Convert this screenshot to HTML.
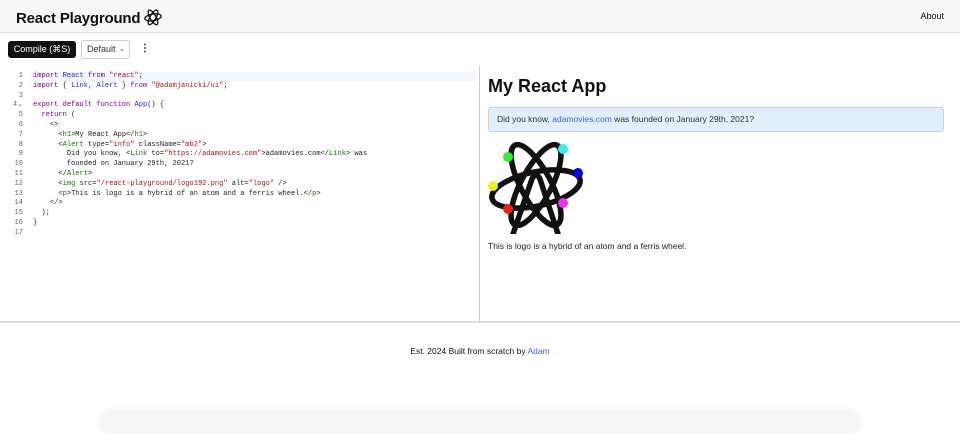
<!DOCTYPE html>
<html><head><meta charset="utf-8"><style>
*{box-sizing:border-box;margin:0;padding:0}
body{width:960px;height:420px;overflow:hidden;background:#fff;font-family:"Liberation Sans",sans-serif;color:#111;position:relative}
.hdr{position:absolute;left:0;top:0;width:960px;height:33px;background:#f7f7f7;border-bottom:1px solid #ddd}
.title{position:absolute;left:16px;top:8px;font-size:15px;font-weight:bold;letter-spacing:-.2px}
.about{position:absolute;right:16px;top:11px;font-size:9px}
.btn{position:absolute;left:8px;top:41px;width:68px;height:17px;background:#111;color:#fff;border-radius:3px;font-size:9px;text-align:center;line-height:17px}
.sel{position:absolute;left:81px;top:40px;width:49px;height:19px;border:1px solid #ccc;border-radius:3px;font-size:9px;line-height:17px;padding-left:5px;color:#333}
.sel span{position:absolute;right:4px;top:0;font-size:7px}
.dots{position:absolute;left:140px;top:42px;font-size:10px;font-weight:bold;line-height:14px}
.ed{position:absolute;left:0;top:66px;width:480px;height:255px;border-right:1px solid #ccc}
.code{position:absolute;left:0;top:6px;font-family:"Liberation Mono",monospace;font-size:7.05px;line-height:9.8px;white-space:pre;color:#222}
.ln{position:absolute;left:0;width:23px;text-align:right;color:#666}
.l{position:absolute;left:33px}
.hl{position:absolute;left:30px;top:6px;width:446px;height:10px;background:#f1f7fc}
.k{color:#708}.f{color:#22d}.s{color:#a11}.t{color:#170}
.bot{position:absolute;left:0;top:321px;width:960px;height:2px;background:#ddd}
h1{position:absolute;left:488px;top:76px;font-size:18px;font-weight:bold}
.alert{position:absolute;left:488px;top:107px;width:456px;height:25px;background:#e3eefb;border:1px solid #b8d4f5;border-radius:3px;font-size:8.5px;line-height:23px;padding-left:8px;color:#234}
a{color:#3466e6;text-decoration:none}
.p{position:absolute;left:488px;top:241px;font-size:8.5px;color:#222}
.foot{position:absolute;left:0;top:346px;width:960px;text-align:center;font-size:8.5px}
.sh{position:absolute;left:100px;top:414px;width:760px;height:20px;border-radius:20px;box-shadow:0 -3px 8px rgba(0,0,0,.06);background:#f6f6f6}
</style></head><body>
<div class="hdr"><div class="title">React Playground <svg width="18" height="18" viewBox="0 0 96 96" style="vertical-align:-3px"><g fill="none" stroke="#111" stroke-width="7"><ellipse cx="48" cy="50" rx="44" ry="18" transform="rotate(-10 48 50)"/><ellipse cx="48" cy="50" rx="44" ry="16" transform="rotate(60 48 50)"/><ellipse cx="48" cy="50" rx="44" ry="16" transform="rotate(-60 48 50)"/></g></svg></div><div class="about">About</div></div>
<div class="btn">Compile (⌘S)</div>
<div class="sel">Default<span>⌄</span></div>
<div class="dots">⋮</div>
<div class="ed"><div class="hl"></div><div class="code">
<div class="ln" style="top:0">1</div><div class="l" style="top:0"><span class="k">import</span> <span class="f">React</span> <span class="k">from</span> <span class="s">"react"</span>;</div>
<div class="ln" style="top:9.8px">2</div><div class="l" style="top:9.8px"><span class="k">import</span> { <span class="f">Link</span>, <span class="f">Alert</span> } <span class="k">from</span> <span class="s">"@adamjanicki/ui"</span>;</div>
<div class="ln" style="top:19.6px">3</div>
<div class="ln" style="top:29.4px">4⌄</div><div class="l" style="top:29.4px"><span class="k">export default function</span> <span class="f">App</span>() {</div>
<div class="ln" style="top:39.2px">5</div><div class="l" style="top:39.2px">  <span class="k">return</span> (</div>
<div class="ln" style="top:49px">6</div><div class="l" style="top:49px">    &lt;&gt;</div>
<div class="ln" style="top:58.8px">7</div><div class="l" style="top:58.8px">      &lt;<span class="t">h1</span>&gt;My React App&lt;/<span class="t">h1</span>&gt;</div>
<div class="ln" style="top:68.6px">8</div><div class="l" style="top:68.6px">      &lt;<span class="t">Alert</span> type=<span class="s">"info"</span> className=<span class="s">"mb2"</span>&gt;</div>
<div class="ln" style="top:78.4px">9</div><div class="l" style="top:78.4px">        Did you know, &lt;<span class="t">Link</span> to=<span class="s">"https://adamovies.com"</span>&gt;adamovies.com&lt;/<span class="t">Link</span>&gt; was</div>
<div class="ln" style="top:88.2px">10</div><div class="l" style="top:88.2px">        founded on January 29th, 2021?</div>
<div class="ln" style="top:98px">11</div><div class="l" style="top:98px">      &lt;/<span class="t">Alert</span>&gt;</div>
<div class="ln" style="top:107.8px">12</div><div class="l" style="top:107.8px">      &lt;<span class="t">img</span> src=<span class="s">"/react-playground/logo192.png"</span> alt=<span class="s">"logo"</span> /&gt;</div>
<div class="ln" style="top:117.6px">13</div><div class="l" style="top:117.6px">      &lt;<span class="t">p</span>&gt;This is logo is a hybrid of an atom and a ferris wheel.&lt;/<span class="t">p</span>&gt;</div>
<div class="ln" style="top:127.4px">14</div><div class="l" style="top:127.4px">    &lt;/&gt;</div>
<div class="ln" style="top:137.2px">15</div><div class="l" style="top:137.2px">  );</div>
<div class="ln" style="top:147px">16</div><div class="l" style="top:147px">}</div>
<div class="ln" style="top:156.8px">17</div>
</div></div>
<h1>My React App</h1>
<div class="alert">Did you know, <a>adamovies.com</a> was founded on January 29th, 2021?</div>
<svg style="position:absolute;left:488px;top:137px" width="96" height="97" viewBox="0 0 96 97">
<g fill="none" stroke="#111" stroke-width="5.5" stroke-linecap="round">
<ellipse cx="48" cy="52" rx="45" ry="17" transform="rotate(-12 48 52)"/>
<ellipse cx="48" cy="48" rx="45" ry="15" transform="rotate(62 48 48)"/>
<ellipse cx="48" cy="48" rx="45" ry="15" transform="rotate(-62 48 48)"/>
<path d="M25 97 L44 42 Q48 34 52 42 L70 97"/>
</g>
<circle cx="20" cy="20" r="5" fill="#3e3"/><circle cx="75" cy="12" r="5" fill="#3ee"/>
<circle cx="90" cy="36" r="5" fill="#00e"/><circle cx="5" cy="49" r="5" fill="#ee2"/>
<circle cx="20" cy="72" r="5" fill="#e21"/><circle cx="75" cy="66" r="5" fill="#e3e"/>
</svg>
<div class="p">This is logo is a hybrid of an atom and a ferris wheel.</div>
<div class="bot"></div>
<div class="foot">Est. 2024 Built from scratch by <a>Adam</a></div>
<div class="sh"></div>
</body></html>
